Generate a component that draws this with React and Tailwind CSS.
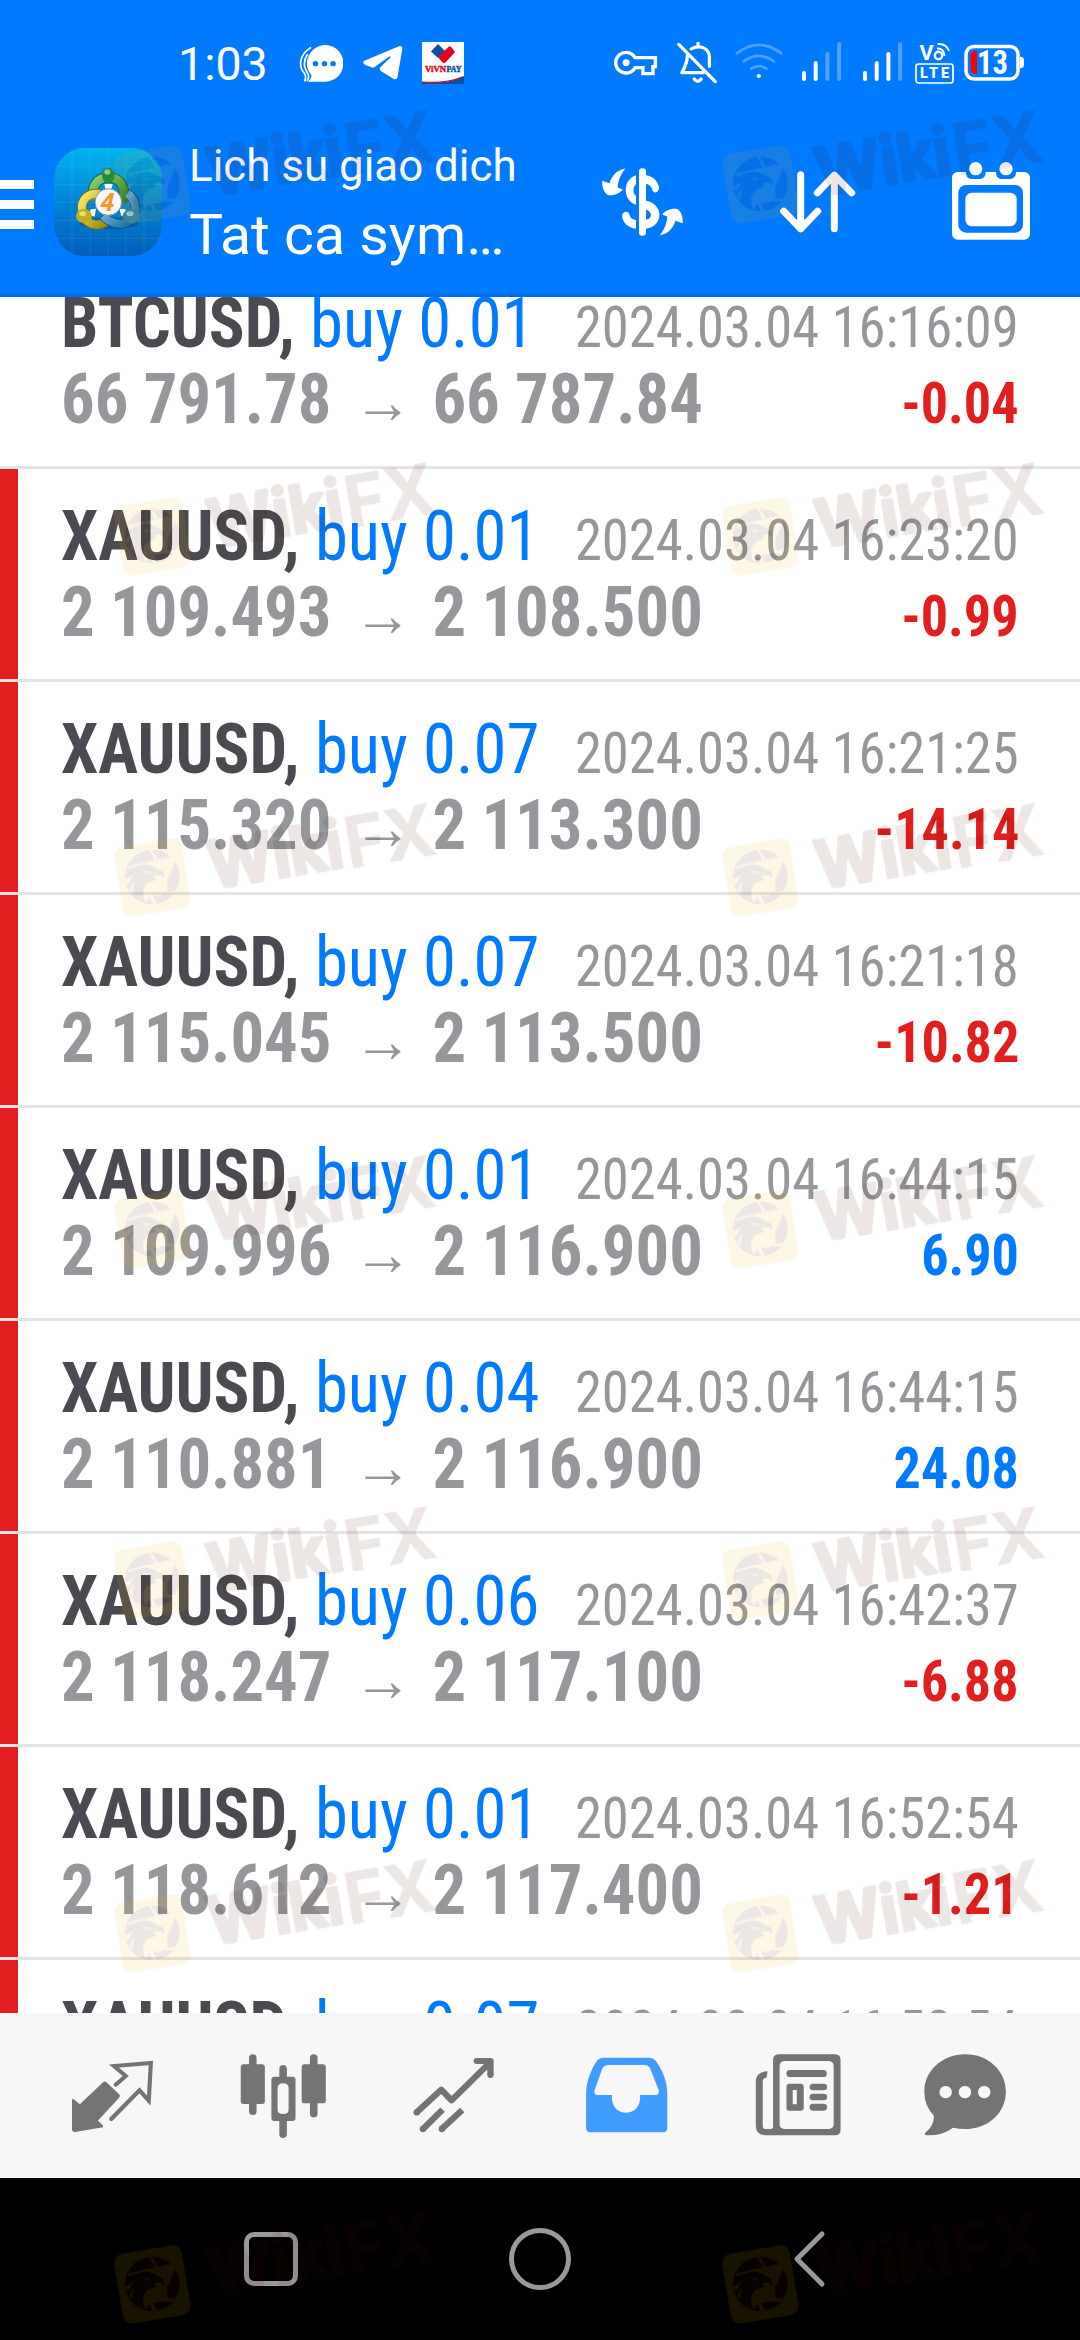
const trades = [
  { sym: "BTCUSD", side: "buy 0.01", time: "2024.03.04 16:16:09", open: "66 791.78", close: "66 787.84", profit: "-0.04", flag: false },
  { sym: "XAUUSD", side: "buy 0.01", time: "2024.03.04 16:23:20", open: "2 109.493", close: "2 108.500", profit: "-0.99", flag: true },
  { sym: "XAUUSD", side: "buy 0.07", time: "2024.03.04 16:21:25", open: "2 115.320", close: "2 113.300", profit: "-14.14", flag: true },
  { sym: "XAUUSD", side: "buy 0.07", time: "2024.03.04 16:21:18", open: "2 115.045", close: "2 113.500", profit: "-10.82", flag: true },
  { sym: "XAUUSD", side: "buy 0.01", time: "2024.03.04 16:44:15", open: "2 109.996", close: "2 116.900", profit: "6.90", flag: true },
  { sym: "XAUUSD", side: "buy 0.04", time: "2024.03.04 16:44:15", open: "2 110.881", close: "2 116.900", profit: "24.08", flag: true },
  { sym: "XAUUSD", side: "buy 0.06", time: "2024.03.04 16:42:37", open: "2 118.247", close: "2 117.100", profit: "-6.88", flag: true },
  { sym: "XAUUSD", side: "buy 0.01", time: "2024.03.04 16:52:54", open: "2 118.612", close: "2 117.400", profit: "-1.21", flag: true },
  { sym: "XAUUSD", side: "buy 0.07", time: "2024.03.04 16:52:54", flag: true },
];

function TradeRow({ t }) {
  return (
    <div className="flex h-[213px] shrink-0 border-b-[3px] border-[#e3e3e3] bg-white">
      <div className={t.flag ? "w-[17.5px] shrink-0 bg-[#e31e1e]" : "w-[17.5px] shrink-0"} />
      <div className="min-w-0 flex-1 pt-[29px] pr-[61px] pl-[43.5px] font-['Roboto_Condensed','Roboto',sans-serif] leading-[76px] whitespace-pre">
        <div className="flex h-[76px] items-baseline justify-between">
          <div className="w-[480px] origin-left scale-x-[0.952] text-[70px]">
            <span className="font-bold text-[#4c4a50]">{t.sym}, </span>
            <span className="text-[#007aff]">{t.side}</span>
          </div>
          <div className="origin-right scale-x-[0.957] text-[57px] text-[#96979b]">{t.time}</div>
        </div>
        {t.open && (
          <div className="flex h-[76px] items-baseline justify-between font-bold">
            <div className="flex w-[680px] origin-left scale-x-[0.952] items-baseline text-[70px] text-[#96979b]">
              <span>{t.open}</span>
              <span className="w-[106px] pl-[2px] text-center font-['Liberation_Sans',sans-serif] text-[62px]">→</span>
              <span>{t.close}</span>
            </div>
            <div className={t.profit.startsWith("-") ? "origin-right scale-x-[0.95] text-[57px] text-[#e31e1e]" : "origin-right scale-x-[0.95] text-[57px] text-[#007aff]"}>{t.profit}</div>
          </div>
        )}
      </div>
    </div>
  );
}

/* Translucent brand mark laid over the whole screen */
function Watermark({ x, y }) {
  return (
    <svg className="absolute" style={{ left: x, top: y }} width="333.3" height="120" viewBox="30 60 1000 360">
      <g opacity="0.105">
        <rect x="-103" y="-106" width="206" height="212" rx="28" transform="translate(157 292) rotate(-9.5)" fill="#ecb400" />
        <g transform="translate(157 291)">
          <circle r="82" fill="#4b1400" />
          <path d="M-72-32L18-53L66-46L44 8L46 50L-8 60L-22 78L-62 20Z" fill="#ecb400" />
          <path d="M-82-2C-70-24-58-30-42-33C-24-42 4-36 14-24C30-22 38-12 36 4C28-6 14-6 4-2C12 4 14 8 2 12C-24 16-36 44-20 80L-50 66L-74 34Z" fill="#4b1400" />
          <path d="M-12-84L-4-84L16-53L8-50ZM22-54L66-62L70-50L46 8L38 4L56-44ZM40 45L78 42L70 51L42 54ZM-10 58L2 56L14 82L4 84ZM-25-20L-8-16L-16-10ZM-84 10L-58-6L-72 22ZM-70 38L-56 10L-60 48Z" fill="#ecb400" />
        </g>
        <g transform="translate(341 335) rotate(-9.5)" fill="#4b1400" stroke="#4b1400" strokeLinejoin="round" fontFamily="Inter, sans-serif">
          <text x="-4" y="-8" fontSize="196" fontWeight="700" strokeWidth="10" textLength="408" lengthAdjust="spacingAndGlyphs">Wiki</text>
          <text x="412" y="0" fontSize="214" fontWeight="700" strokeWidth="2" textLength="272" lengthAdjust="spacingAndGlyphs">FX</text>
        </g>
      </g>
    </svg>
  );
}

const watermarkRows = [106.5, 458.5, 799.5, 1152, 1503, 1855.5, 2206.5];

function AppLogo() {
  return (
    <svg className="ml-5 shrink-0" width="108" height="108" viewBox="12 84 324 324">
      <defs>
        <linearGradient id="tile" x1="0" y1="0" x2="0" y2="1">
          <stop offset="0" stopColor="#00b4ee" />
          <stop offset="0.45" stopColor="#0089d8" />
          <stop offset="1" stopColor="#005fb8" />
        </linearGradient>
        <linearGradient id="green" x1="0" y1="0" x2="1" y2="1"><stop offset="0" stopColor="#8fd07a" /><stop offset="1" stopColor="#1f7a2a" /></linearGradient>
        <linearGradient id="gold" x1="0" y1="0" x2="1" y2="1"><stop offset="0" stopColor="#f7ee6a" /><stop offset="1" stopColor="#9c8a0a" /></linearGradient>
        <linearGradient id="sky" x1="0" y1="0" x2="1" y2="1"><stop offset="0" stopColor="#9ad8f7" /><stop offset="1" stopColor="#12659f" /></linearGradient>
      </defs>
      <rect x="12" y="84" width="324" height="324" rx="92" fill="url(#tile)" />
      <path d="M66 90V402M120 84V408M174 84V408M228 84V408M282 90V402M16 139H332M12 193H336M12 247H336M12 301H336M16 355H332" stroke="#fff" strokeOpacity="0.08" strokeWidth="3" />
      <ellipse cx="178" cy="310" rx="88" ry="18" fill="#003a70" opacity="0.35" />
      <path d="M132 240C120 205 140 172 175 172C212 172 232 208 216 245" fill="none" stroke="#14591d" strokeWidth="31" />
      <path d="M132 240C120 205 140 172 175 172C212 172 232 208 216 245" fill="none" stroke="url(#green)" strokeWidth="26" />
      <path d="M150 222C115 216 90 240 97 275C105 315 140 322 168 306" fill="none" stroke="#7c6d0c" strokeWidth="29" />
      <path d="M150 222C115 216 90 240 97 275C105 315 140 322 168 306" fill="none" stroke="url(#gold)" strokeWidth="24" />
      <path d="M232 220C262 240 264 280 240 302C215 320 180 310 160 288" fill="none" stroke="#0f4e80" strokeWidth="29" />
      <path d="M232 220C262 240 264 280 240 302C215 320 180 310 160 288" fill="none" stroke="url(#sky)" strokeWidth="24" />
      <path d="M163 192H188L182 214H168ZM122 268L138 266L134 290L118 284ZM208 266L226 268L230 284L214 288Z" fill="#fff" />
      <ellipse cx="175" cy="166" rx="19" ry="23" fill="#2e8a35" />
      <ellipse cx="172" cy="156" rx="9" ry="8" fill="#a5dc9a" opacity="0.8" />
      <ellipse cx="102" cy="288" rx="24" ry="21" fill="#c2ac22" />
      <ellipse cx="98" cy="281" rx="10" ry="7" fill="#f5ec90" opacity="0.8" />
      <ellipse cx="244" cy="289" rx="26" ry="22" fill="#2c7fa8" />
      <ellipse cx="240" cy="281" rx="11" ry="7" fill="#a6dcf0" opacity="0.8" />
      <circle cx="175" cy="246" r="40" fill="#f7f7f7" stroke="#8d8d8d" strokeWidth="3" />
      <text x="173" y="272" textAnchor="middle" fontFamily="Open Sans, sans-serif" fontStyle="italic" fontWeight="700" fontSize="74" fill="#f7962e">4</text>
    </svg>
  );
}

function StatusBar() {
  return (
    <div className="flex h-[126px] shrink-0 items-center pl-[178px] text-white">
      <span className="mt-[2px] w-[90px] font-['Roboto',sans-serif] text-[46.5px] leading-[92px]">1:03</span>
      <svg className="ml-[31px] shrink-0" width="44" height="42" viewBox="867 126 127.8 126" preserveAspectRatio="none">
        <path d="M893 245Q904 236 903 226A53 55 0 1 1 941 245Z" fill="#fff" />
        <path d="M902 142C866 165 866 200 882 219Q890 230 883 244M892 163C874 190 886 210 893 222Q898 234 890 243" fill="none" stroke="#fff" strokeWidth="5" />
        <g fill="#007aff"><circle cx="915" cy="191" r="8" /><circle cx="941" cy="191" r="8" /><circle cx="966" cy="191" r="8" /></g>
      </svg>
      <svg className="ml-[19px] shrink-0" width="41" height="42" viewBox="1050 131 119 126" preserveAspectRatio="none">
        <path d="M1057 187L1159 143Q1168 141 1167 151L1153 237Q1150 246 1141 241L1108 220Q1097 213 1104 206L1132 178Q1134 172 1128 175L1091 203Q1085 209 1078 207L1059 200Q1049 192 1057 187Z" fill="#fff" />
      </svg>
      <svg className="ml-[19px] shrink-0" width="42" height="42" viewBox="0 0 42 42">
        <rect width="42" height="42" fill="#fcfcfc" />
        <path d="M9 9.500L16 2L23 9L16 16Z" fill="#0b4ea2" />
        <path d="M16 15L27 4.500Q29 4 30 6L33 10L24 20Q22 22 20 20Z" fill="#e3001b" />
        <path d="M0 40Q28 42 42 34V42H0Z" fill="#0b4ea2" />
        <path d="M0 40Q24 42 40 35" fill="none" stroke="#e3001b" strokeWidth="1.200" />
        <g fontFamily="Liberation Serif, serif" fontWeight="700" fontSize="9">
          <text x="3" y="30" textLength="21" lengthAdjust="spacingAndGlyphs" fill="#e3001b" stroke="#e3001b" strokeWidth="0.400">ViVN</text>
          <text x="24.500" y="30" textLength="15" lengthAdjust="spacingAndGlyphs" fill="#0b4ea2" stroke="#0b4ea2" strokeWidth="0.400">PAY</text>
        </g>
      </svg>
      <svg className="ml-[148px] shrink-0" width="46" height="42" viewBox="209 126 133.6 126" preserveAspectRatio="none" fill="none" stroke="#fff" strokeWidth="10">
        <path d="M276 173A30 31 0 1 0 276 203H299V221H328V200H335V173Z" />
        <circle cx="250" cy="188" r="10" fill="#fff" stroke="none" />
      </svg>
      <svg className="ml-[17.7px] shrink-0" width="42" height="42" viewBox="394 126 122 126" preserveAspectRatio="none" fill="none" stroke="#fff" strokeWidth="9.500" strokeLinecap="round" strokeLinejoin="round">
        <path d="M402 133L508 245M427 166C427 190 419 204 411 218H474M438 147C462 132 491 145 491 172V199M458 130V139" />
        <path d="M447 237Q457 251 467 237" />
      </svg>
      <svg className="ml-[15.8px] shrink-0" width="52" height="42" viewBox="562 126 151 126" preserveAspectRatio="none" fill="none" stroke="#fff" strokeWidth="8" strokeLinecap="round">
        <path d="M573 160Q637 109 702 160M593 184Q637 151 681 184M615 206Q637 191 659 206" strokeOpacity="0.3" />
        <circle cx="637" cy="228" r="6" fill="#fff" stroke="none" />
      </svg>
      {[2, 3].map((lit, k) => (
        <svg key={lit} className={k === 0 ? "ml-[16.3px] shrink-0" : "ml-[21px] shrink-0"} width="40" height="42" viewBox="0 0 40 42">
          {[29, 19, 10, 0].map((top, i) => (
            <rect key={top} x={i * 11.7} y={top} width="4" height={39 - top} rx="2" fill="#fff" fillOpacity={3 - i < 4 - lit ? 0.3 : 1} />
          ))}
        </svg>
      ))}
      <svg className="ml-[12.3px] shrink-0" width="40" height="42" viewBox="0 0 40 42">
        <g fill="#fff" fontFamily="Roboto, sans-serif" fontWeight="700">
          <text x="4.500" y="18" fontSize="20" textLength="14" lengthAdjust="spacingAndGlyphs">V</text>
          <text x="5" y="36" fontSize="14.500" fontWeight="900" textLength="29" lengthAdjust="spacing">LTE</text>
        </g>
        <circle cx="23.500" cy="13.500" r="3.700" fill="none" stroke="#fff" strokeWidth="2.400" />
        <path d="M22 6.500Q29 6 29.500 14M22.500 2Q31 1 34 9" fill="none" stroke="#fff" strokeWidth="2" />
        <rect x="1" y="22" width="37" height="19" rx="2.500" fill="none" stroke="#fff" strokeWidth="1.700" />
      </svg>
      <svg className="ml-[9.4px] shrink-0" width="61" height="42" viewBox="0 0 61 42">
        <rect x="2" y="4.500" width="52" height="32.500" rx="8" fill="none" stroke="#fff" strokeWidth="3.500" />
        <path d="M56 14.500Q60 15 60 18V23Q60 26 56 26.500Z" fill="#fff" />
        <path d="M13 9V32H10Q6.500 31 6.500 26V15Q6.500 9.500 10 9Z" fill="#ff0000" />
        <text x="13" y="32" fontFamily="Roboto Condensed, Roboto, sans-serif" fontWeight="700" fontSize="33" fill="#fff" textLength="31" lengthAdjust="spacingAndGlyphs">13</text>
      </svg>
    </div>
  );
}

function Toolbar() {
  return (
    <div className="flex h-[152px] shrink-0 items-center font-['Roboto',sans-serif] text-white">
      <div className="mt-[5px] flex w-[34px] shrink-0 flex-col gap-[11px]">
        <div className="h-[9px] bg-white" /><div className="h-[9px] bg-white" /><div className="h-[9px] bg-white" />
      </div>
      <AppLogo />
      <div className="mt-[3px] ml-[27px] w-[330px] shrink-0 self-start whitespace-nowrap">
        <div className="origin-left scale-x-[0.975] text-[45px] leading-[73px]">Lich su giao dich</div>
        <div className="origin-left scale-x-[1.022] text-[56px] leading-[66px]">Tat ca sym…</div>
      </div>
      <svg className="ml-[81px] shrink-0" width="85" height="70" viewBox="30 52.5 255 210" fill="#fff">
        <rect x="147" y="56" width="21" height="203" rx="10" />
        <path d="M138 77C97 90 97 152 138 166V139C128 132 128 112 138 104ZM168 77C190 80 205 96 207 115C206 130 192 133 188 124C185 112 180 107 168 103ZM168 154C222 164 222 230 168 238V211C188 208 188 186 168 181ZM138 238C112 234 97 218 96 198C99 184 114 184 118 194C120 204 126 209 138 212Z" />
        <path id="cycle" d="M106 57C80 62 64 80 59 101L37 94C35 110 42 134 56 137C74 139 90 130 99 120L83 114C84 92 94 72 106 57Z" />
        <use href="#cycle" transform="rotate(180 157.5 157.5)" />
      </svg>
      <svg className="ml-[93px] shrink-0" width="79" height="66" viewBox="564 58.5 237 198" fill="none" stroke="#fff" strokeWidth="21" strokeLinecap="round" strokeLinejoin="round">
        <path d="M632 76V238M581 185L632 238L683 185M733 238V77M682 130L733 77L785 130" />
      </svg>
      <svg className="-mt-[2px] ml-[93px] shrink-0" width="82" height="82" viewBox="1080 30 246 246" fill="#fff">
        <rect x="1086" y="66" width="234" height="203" rx="17" />
        <path d="M1128 66V70Q1130 87 1144 87H1170Q1185 86 1187 70V66ZM1218 66V70Q1220 87 1234 87H1260Q1276 86 1278 70V66Z" fill="#007aff" />
        <rect x="1105" y="105" width="194" height="143" rx="24" fill="#007aff" />
        <rect x="1126" y="128" width="154" height="101" rx="20" />
        <circle cx="1157" cy="56" r="20" /><circle cx="1248" cy="56" r="20" />
      </svg>
    </div>
  );
}

function BottomNav() {
  const box = { width: 100, height: 90, preserveAspectRatio: "none", fill: "#747474" };
  return (
    <div className="flex h-[165px] shrink-0 items-center justify-between bg-[#f7f7f7] pr-[65px] pl-[62px]">
      <svg {...box} viewBox="180 360 290.4 270">
        <path d="M214 505L232 520L300 453Q304 449 309 454L346 490Q351 495 346 500L284 569L299 583V589L218 603Q209 603 209 594V505Z" />
        <path d="M336 461L365 435L331 405L438 396L432 509L405 478L323 564" fill="none" stroke="#747474" strokeWidth="12" strokeLinecap="round" />
      </svg>
      <svg {...box} viewBox="675.5 360 290.4 270">
        <path fillRule="evenodd" d="M722 400V381Q722 370 733 370Q744 370 744 381V400H760Q768 401 768 409V511Q768 519 760 519H744V541Q744 552 733 552Q722 552 722 541V519H706Q698 519 698 511V409Q698 401 706 400ZM899 400V381Q899 370 910 370Q921 370 921 381V400H937Q945 401 945 409V509Q945 517 937 517H921V548Q921 559 910 559Q899 559 899 548V517H883Q875 517 875 509V409Q875 401 883 400ZM810 437V414Q810 402 821 402Q832 402 832 414V437H849Q857 438 857 446V562Q857 570 849 570H832V610Q832 621 821 621Q810 621 810 610V570H795Q787 570 787 562V446Q787 438 795 437ZM819 457Q805 458 805 472V536Q805 549 821 549Q837 549 837 536V472Q837 458 824 457Z" />
      </svg>
      <svg {...box} viewBox="1171 360 290.4 270">
        <path d="M1211 544L1282 476L1312 508L1424 394M1385 390H1425V432M1229 594L1286 536M1283 594L1343 537" fill="none" stroke="#747474" strokeWidth="18.500" strokeLinejoin="round" />
        <circle cx="1211" cy="544" r="9.500" /><circle cx="1385" cy="390" r="9" /><circle cx="1425" cy="432" r="9" /><circle cx="1229" cy="594" r="9.500" /><circle cx="1284" cy="594" r="9.500" />
      </svg>
      <svg {...box} viewBox="98 360 290.4 270">
        <path fill="#409cff" fillRule="evenodd" d="M182 380H318Q328 380 334 388C354 415 369 450 369 490V590Q369 604 354 604H148Q133 604 133 590V490C133 450 150 410 166 388Q172 380 182 380ZM198 402H302Q314 402 319 412L344 478Q347 492 334 492H290V502C288 560 210 560 208 502V492H166Q154 490 158 477L180 413Q186 402 198 402Z" />
      </svg>
      <svg {...box} viewBox="593.6 360 290.4 270">
        <path fillRule="evenodd" d="M694 370H858Q874 371 874 387V597Q874 613 858 613H656Q628 612 628 585V450Q629 422 662 421L659 440Q648 440 648 452V584Q648 594 658 594H672Q678 594 678 588V387Q678 371 694 370ZM711 390Q697 391 697 405V579Q697 593 711 594H840Q854 593 854 579V405Q854 391 840 390Z" />
        <rect x="717" y="417" width="117" height="21" rx="10" />
        <path fillRule="evenodd" d="M725 458H759Q767 459 767 467V531Q767 539 759 539H725Q717 539 717 531V467Q717 459 725 458ZM735 477V520H747V477Z" />
        <rect x="784" y="458" width="51" height="20" rx="10" /><rect x="784" y="488" width="51" height="20" rx="10" /><rect x="784" y="518" width="51" height="21" rx="10" />
      </svg>
      <svg {...box} viewBox="1089 360 290.4 270">
        <path fillRule="evenodd" d="M1235 370C1300 370 1353 418 1353 482C1353 546 1300 594 1235 594Q1216 594 1199 590Q1172 613 1125 613Q1113 613 1120 604Q1144 585 1144 554Q1116 524 1116 482C1116 418 1170 370 1235 370ZM1178 465A18 18.500 0 1 0 1178.100 465ZM1234 465A18 18.500 0 1 0 1234.100 465ZM1290 465A18 18.500 0 1 0 1290.100 465Z" />
      </svg>
    </div>
  );
}

export default function App() {
  return (
    <div className="relative flex h-[2340px] w-[1080px] flex-col overflow-hidden bg-white">
      <header className="flex h-[297px] shrink-0 flex-col border-b-[3px] border-[#0070ea] bg-[#007aff]">
        <StatusBar />
        <Toolbar />
      </header>
      <main className="flex h-[1716px] shrink-0 flex-col overflow-hidden">
        <div className="-mt-[41px] flex flex-col">
          {trades.map((t, i) => <TradeRow key={i} t={t} />)}
        </div>
      </main>
      <BottomNav />
      <footer className="flex h-[162px] shrink-0 items-center bg-black">
        <div className="ml-[243.5px] size-[54px] rounded-[10px] border-[5px] border-[#999]" />
        <div className="ml-[211.5px] size-[62px] rounded-full border-[5px] border-[#999]" />
        <svg className="ml-[220px]" width="36" height="60" viewBox="0 0 36 60" fill="none" stroke="#999" strokeWidth="5" strokeLinecap="round" strokeLinejoin="round">
          <path d="M31 5L6 30L31 55" />
        </svg>
      </footer>
      <div className="pointer-events-none absolute inset-0">
        {watermarkRows.map((y) => [110, 717.5].map((x) => <Watermark key={x + "-" + y} x={x} y={y} />))}
      </div>
    </div>
  );
}
